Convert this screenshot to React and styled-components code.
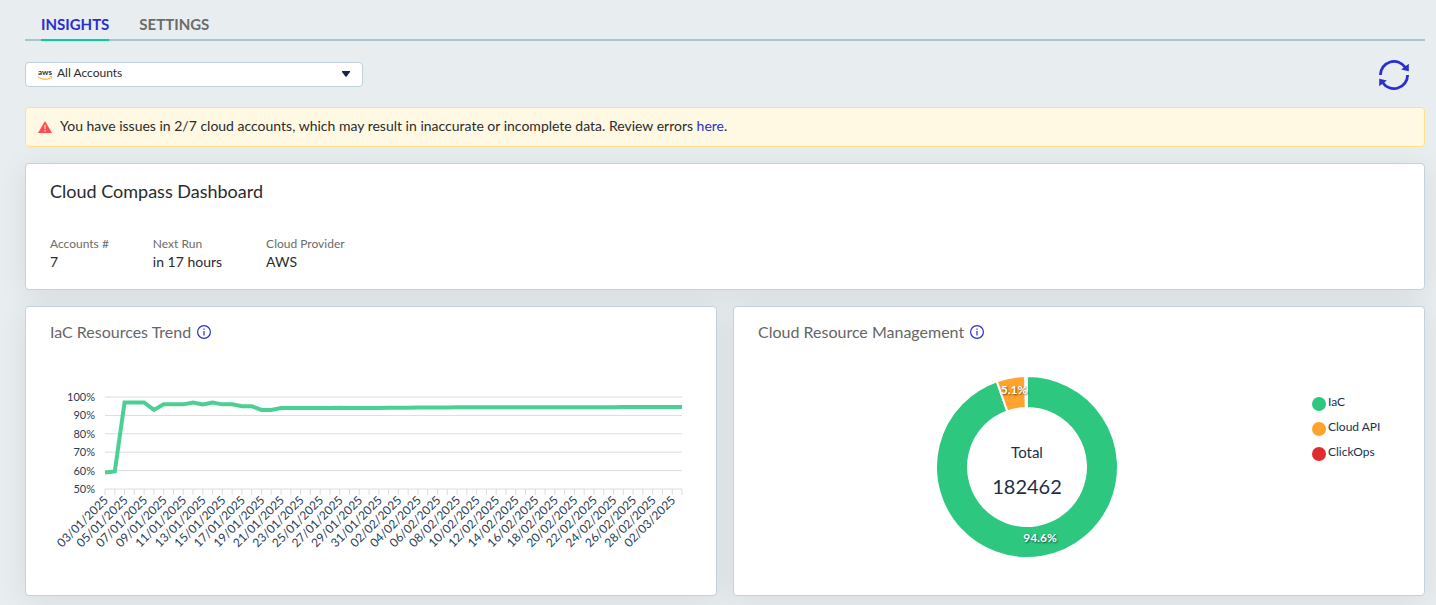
import React, { useState } from 'react';
import styled, { createGlobalStyle } from 'styled-components';

const GlobalStyle = createGlobalStyle`
  * {
    box-sizing: border-box;
  }
  body {
    margin: 0;
    background: #e8edf0;
    color: #2b2b2b;
    font-family: Lato, 'Open Sans', sans-serif;
    font-size: 14px;
  }
`;

const Page = styled.main`
  min-height: 100vh;
  padding: 10px 11px 9px 25px;
  display: flex;
  flex-direction: column;
  gap: 16px;
`;

const Tabs = styled.nav`
  display: flex;
  gap: 30px;
  padding: 0 16px;
  box-shadow: inset 0 -2px 0 #a9c4d1;
`;

const Tab = styled.button`
  height: 31px;
  padding: 0 0 1px;
  border: none;
  border-bottom: 2px solid ${(p) => (p.$active ? '#00cfa5' : 'transparent')};
  background: none;
  color: ${(p) => (p.$active ? '#2a2fd0' : '#6b6b6b')};
  font: bold 15px/28px Lato, sans-serif;
  cursor: pointer;
`;

const Toolbar = styled.div`
  display: flex;
  align-items: center;
  justify-content: space-between;
  height: 34px;
  padding-right: 16px;
`;

const AccountPicker = styled.label`
  display: grid;
  grid-template-columns: 16px 1fr 10px;
  align-items: center;
  gap: 4px;
  width: 338px;
  height: 25px;
  padding: 0 11px;
  border: 1px solid #bfd0da;
  border-radius: 4px;
  background: #fff;
`;

const AccountSelect = styled.select`
  appearance: none;
  width: 100%;
  height: 20px;
  padding: 0 0 3px;
  border: none;
  outline: none;
  background: transparent;
  color: #2b2b2b;
  font: 12px Lato, sans-serif;
`;

const RefreshButton = styled.button`
  display: flex;
  padding: 2px 0 0;
  border: none;
  background: none;
  color: #2a2fd0;
  cursor: pointer;
`;

const Alert = styled.div`
  display: flex;
  align-items: center;
  gap: 8px;
  height: 40px;
  padding: 0 12px;
  border: 1px solid #ffe08a;
  border-radius: 4px;
  background: #fff9e3;
`;

const AlertText = styled.span`
  padding-bottom: 3px;
`;

const AlertLink = styled.a`
  color: #2a2fd0;
  text-decoration: none;
`;

const Card = styled.section`
  padding: 15px 24px 18px;
  border: 1px solid #c3d2dc;
  border-radius: 4px;
  background: #fff;
  box-shadow: 0 4px 30px rgba(0, 0, 0, 0.08);
`;

const PageTitle = styled.h1`
  margin: 0 0 32px;
  font-size: 18px;
  font-weight: 400;
  line-height: 24px;
`;

const Facts = styled.dl`
  display: flex;
  gap: 44px;
  margin: 0;
`;

const FactLabel = styled.dt`
  color: #6b6b6b;
  font-size: 12px;
  line-height: 18px;
`;

const FactValue = styled.dd`
  margin: 0;
  line-height: 18px;
`;

const Columns = styled.div`
  display: grid;
  grid-template-columns: 1fr 1fr;
  gap: 16px;
`;

const CardTitle = styled.h2`
  display: flex;
  align-items: center;
  gap: 6px;
  margin: 0 0 21px;
  color: #666;
  font-size: 16px;
  font-weight: 400;
  line-height: 20px;
`;

const TrendSvg = styled.svg`
  display: block;
  width: 100%;
  margin-bottom: 18px;
`;

const AxisText = styled.text`
  fill: #2a3c56;
  font-size: ${(p) => p.$size}px;
  text-anchor: end;
`;

const DonutRow = styled.div`
  display: grid;
  grid-template-columns: 1fr 88px;
  gap: 16px;
  padding-top: 4px;
`;

const DonutSvg = styled.svg`
  justify-self: center;
`;

const SliceLabel = styled.text`
  fill: #fff;
  font-size: 12px;
  font-weight: bold;
  text-anchor: middle;
  text-shadow: 1px 1px 2px rgba(0, 0, 0, 0.6);
`;

const TotalText = styled.text`
  fill: #1b2f4b;
  font-size: ${(p) => p.$size}px;
  text-anchor: middle;
`;

const Legend = styled.ul`
  display: flex;
  flex-direction: column;
  gap: 7px;
  margin: 0;
  padding: 26px 0 0;
  list-style: none;
`;

const LegendItem = styled.li`
  display: flex;
  align-items: flex-end;
  gap: 2px;
  height: 18px;
  color: #1b2f4b;
  font-size: 12px;
  line-height: 18px;

  &::before {
    content: '';
    width: 14px;
    height: 14px;
    border-radius: 50%;
    background: ${(p) => p.$color};
  }
`;

const AwsIcon = () => (
  <svg width="16" height="14" viewBox="0 0 16 14" aria-hidden="true">
    <text x="8" y="8" textAnchor="middle" fontSize="8" fontWeight="bold" fill="#252f3e">aws</text>
    <path d="M1 10c4 2.8 9 2.8 12.4 1" fill="none" stroke="#f90" strokeWidth="0.9" />
    <path d="M12.4 9.8l2.4-.4-.6 2.4" fill="none" stroke="#f90" strokeWidth="0.7" />
  </svg>
);

const CaretIcon = () => (
  <svg width="10" height="6" viewBox="0 0 10 6" aria-hidden="true">
    <path d="M1.4 0h7.2q1 0 .4.9L5.6 5.4q-.6.6-1.2 0L1 .9Q.4 0 1.4 0z" fill="#12284a" />
  </svg>
);

const RefreshIcon = () => (
  <svg width="30" height="30" viewBox="0 0 30 30" fill="none" aria-hidden="true">
    <g stroke="currentColor" strokeWidth="2.8">
      <path d="M1.4 15A13.6 13.6 0 0 1 26.4 7.6" />
      <path d="M28.6 15A13.6 13.6 0 0 1 3.6 22.4" />
    </g>
    <path d="M29.8 3.8v7.4l-7.6-1.6zM.2 26.2v-7.4l7.6 1.6z" fill="currentColor" />
  </svg>
);

const WarningIcon = () => (
  <svg width="14" height="12" viewBox="0 0 14 12" aria-hidden="true">
    <path d="M7 0l7 12H0z" fill="#ff4d4f" />
    <path d="M7 4v4M7 9v1.4" stroke="#ffc9c9" strokeWidth="1.4" />
  </svg>
);

const InfoIcon = () => (
  <svg width="14" height="14" viewBox="0 0 14 14" fill="none" stroke="#2a2fd0" aria-hidden="true">
    <circle cx="7" cy="7" r="6.4" strokeWidth="1.2" />
    <path d="M7 6v4.4M7 3.4v1.4" strokeWidth="1.2" />
  </svg>
);

const facts = [
  { label: 'Accounts #', value: '7' },
  { label: 'Next Run', value: 'in 17 hours' },
  { label: 'Cloud Provider', value: 'AWS' },
];

// one value per day, 03/01/2025 - 03/03/2025
const trend = [
  59, 59.5, 97, 97, 97, 93, 96, 96, 96, 97, 96, 97, 96, 96, 95, 95, 93, 93,
  94, 94, 94, 94, 94, 94, 94.2, 94, 94, 94, 94, 94.1, 94.2, 94.2, 94.3, 94.3,
  94.3, 94.3, 94.4, 94.4, 94.4, 94.4, 94.4, 94.4, 94.4, 94.4, 94.4, 94.4, 94.4,
  94.4, 94.4, 94.4, 94.4, 94.4, 94.4, 94.6, 94.6, 94.6, 94.6, 94.6, 94.6, 94.6,
];

const PLOT = { left: 55, right: 632, top: 34, bottom: 126 };
const step = (PLOT.right - PLOT.left) / (trend.length - 1);
const xOf = (i) => PLOT.left + i * step;
const yOf = (v) => PLOT.bottom - ((v - 50) / 50) * (PLOT.bottom - PLOT.top);

const dayLabel = (i) => {
  const d = new Date(Date.UTC(2025, 0, 3 + i));
  const pad = (n) => String(n).padStart(2, '0');
  return `${pad(d.getUTCDate())}/${pad(d.getUTCMonth() + 1)}/${d.getUTCFullYear()}`;
};

const TrendChart = () => (
  <TrendSvg viewBox="0 0 642 196" role="img" aria-label="IaC Resources Trend">
    {[100, 90, 80, 70, 60, 50].map((v) => (
      <g key={v}>
        <line x1={PLOT.left} x2={PLOT.right} y1={yOf(v)} y2={yOf(v)} stroke="#dcdcdc" />
        <AxisText $size={11} x={45} y={yOf(v) + 4}>{v}%</AxisText>
      </g>
    ))}
    {trend.map((_, i) => (
      <line key={i} x1={xOf(i)} x2={xOf(i)} y1={PLOT.bottom} y2={PLOT.bottom + 6} stroke="#dcdcdc" />
    ))}
    {trend.map((_, i) => i % 2 === 0 && (
      <AxisText key={i} $size={12} transform={`translate(${xOf(i) + 4} ${PLOT.bottom + 12}) rotate(-45)`}>
        {dayLabel(i)}
      </AxisText>
    ))}
    <polyline
      points={trend.map((v, i) => `${xOf(i)},${yOf(v)}`).join(' ')}
      fill="none"
      stroke="#4bd093"
      strokeWidth="4"
    />
  </TrendSvg>
);

const slices = [
  { name: 'IaC', value: 94.6, color: '#2dc780' },
  { name: 'Cloud API', value: 5.1, color: '#ffa22e' },
  { name: 'ClickOps', value: 0.3, color: '#e02b30' },
];

const polar = (r, pct) => {
  const a = (pct / 100) * Math.PI * 2;
  return `${100 + r * Math.sin(a)} ${100 - r * Math.cos(a)}`;
};

const arc = (from, to) => {
  const large = to - from > 50 ? 1 : 0;
  return `M${polar(91, from)}A91 91 0 ${large} 1 ${polar(91, to)}L${polar(59, to)}A59 59 0 ${large} 0 ${polar(59, from)}Z`;
};

const DonutChart = () => {
  let start = 0;
  return (
    <DonutSvg width="200" height="200" viewBox="0 0 200 200" role="img" aria-label="Cloud Resource Management">
      {slices.map((s) => {
        const from = start;
        start += s.value;
        return <path key={s.name} d={arc(from, start)} fill={s.color} stroke="#fff" strokeWidth="2" />;
      })}
      <SliceLabel x="113" y="175">94.6%</SliceLabel>
      <SliceLabel x="87" y="27">5.1%</SliceLabel>
      <TotalText $size={15} x="100" y="91">Total</TotalText>
      <TotalText $size={20} x="100" y="127">182462</TotalText>
    </DonutSvg>
  );
};

const App = () => {
  const [tab, setTab] = useState('INSIGHTS');

  return (
    <>
      <GlobalStyle />
      <Page>
        <Tabs>
          {['INSIGHTS', 'SETTINGS'].map((name) => (
            <Tab key={name} type="button" $active={tab === name} onClick={() => setTab(name)}>
              {name}
            </Tab>
          ))}
        </Tabs>
        <Toolbar>
          <AccountPicker>
            <AwsIcon />
            <AccountSelect aria-label="Accounts">
              <option>All Accounts</option>
            </AccountSelect>
            <CaretIcon />
          </AccountPicker>
          <RefreshButton type="button" aria-label="Refresh">
            <RefreshIcon />
          </RefreshButton>
        </Toolbar>
        <Alert role="alert">
          <WarningIcon />
          <AlertText>
            You have issues in 2/7 cloud accounts, which may result in inaccurate or incomplete data. Review errors{' '}
            <AlertLink href="#errors">here</AlertLink>.
          </AlertText>
        </Alert>
        <Card>
          <PageTitle>Cloud Compass Dashboard</PageTitle>
          <Facts>
            {facts.map((f) => (
              <div key={f.label}>
                <FactLabel>{f.label}</FactLabel>
                <FactValue>{f.value}</FactValue>
              </div>
            ))}
          </Facts>
        </Card>
        <Columns>
          <Card>
            <CardTitle>IaC Resources Trend <InfoIcon /></CardTitle>
            <TrendChart />
          </Card>
          <Card>
            <CardTitle>Cloud Resource Management <InfoIcon /></CardTitle>
            <DonutRow>
              <DonutChart />
              <Legend>
                {slices.map((s) => (
                  <LegendItem key={s.name} $color={s.color}>{s.name}</LegendItem>
                ))}
              </Legend>
            </DonutRow>
          </Card>
        </Columns>
      </Page>
    </>
  );
};

export default App;
